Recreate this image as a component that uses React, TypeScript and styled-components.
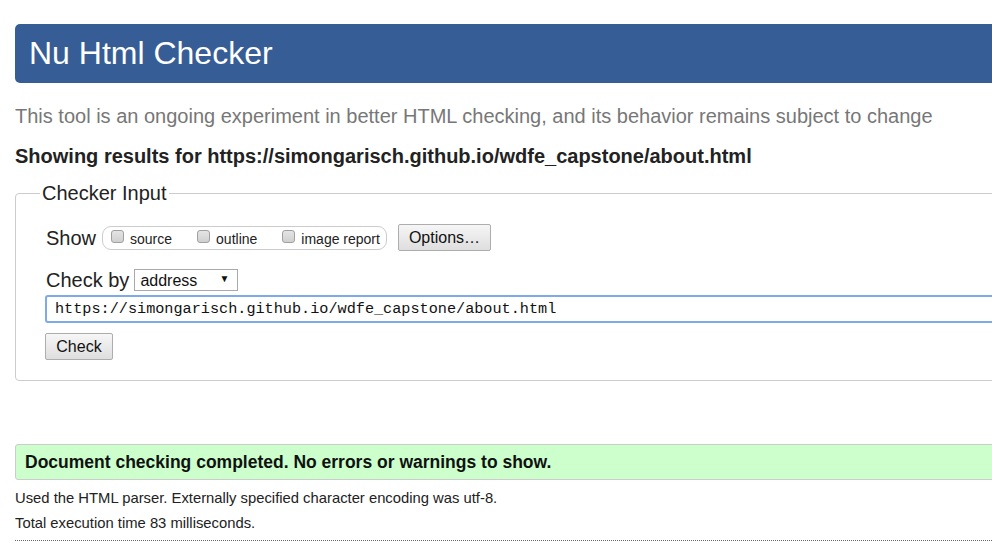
import styled, { createGlobalStyle } from "styled-components";

const GlobalStyle = createGlobalStyle`
  html, body {
    margin: 0;
    padding: 0;
    background: #fff;
    overflow: hidden;
  }
  body {
    font-family: "Liberation Sans", Arial, sans-serif;
    color: #222;
  }
`;

const Page = styled.div`
  width: 1060px;
  padding: 24px 0 0 15px;
  box-sizing: border-box;
`;

const Banner = styled.header`
  height: 59px;
  background: #365d95;
  border-radius: 5px;
  padding-left: 14px;
`;

const Title = styled.h1`
  margin: 0;
  color: #fff;
  font-size: 32px;
  font-weight: normal;
  line-height: 59px;
`;

const Intro = styled.p`
  margin: 21px 0 0;
  color: #777;
  font-size: 20px;
  line-height: 24px;
`;

const ResultsFor = styled.p`
  margin: 17px 0 0;
  font-size: 20px;
  font-weight: bold;
  line-height: 22px;
`;

const Fieldset = styled.fieldset`
  margin: 14px 0 0;
  padding: 19px 30px 20px 30px;
  border: 1px solid #ccc;
  border-radius: 4px;
  min-width: 0;
`;

const Legend = styled.legend`
  margin-left: -6px;
  padding: 0 2px;
  font-size: 20px;
  line-height: 24px;
`;

const Row = styled.div<{ $gap?: number; $top?: number }>`
  display: flex;
  align-items: center;
  gap: ${(p) => p.$gap ?? 6}px;
  margin-top: ${(p) => p.$top ?? 0}px;
`;

const Label = styled.span`
  font-size: 20px;
  line-height: 24px;
`;

const Pill = styled.div`
  display: flex;
  align-items: center;
  height: 22px;
  padding: 0 6px 0 8px;
  border: 1px solid #ccc;
  border-radius: 9px;
  gap: 25px;
`;

const Option = styled.label`
  display: flex;
  align-items: center;
  gap: 6px;
  font-size: 14px;
  line-height: 16px;
  padding-top: 3px;
`;

const Box = styled.input`
  appearance: none;
  margin: -5px 0 0;
  width: 13px;
  height: 13px;
  border: 1px solid #a0a0a0;
  border-radius: 3px;
  background: linear-gradient(#e4e4e4, #d0d0d0);
  box-sizing: border-box;
`;

const Button = styled.button<{ $left?: number }>`
  height: 27px;
  margin-left: ${(p) => p.$left ?? 0}px;
  padding: 0 10px;
  font-family: "Liberation Sans", Arial, sans-serif;
  font-size: 16px;
  color: #111;
  border: 1px solid #adadad;
  border-radius: 2px;
  background: linear-gradient(#f6f6f6, #dedede);
`;

const SelectWrap = styled.span`
  position: relative;
  display: inline-block;
`;

const Select = styled.select`
  appearance: none;
  width: 104px;
  height: 22px;
  padding: 0 0 0 5px;
  font-family: "Liberation Sans", Arial, sans-serif;
  font-size: 16px;
  color: #111;
  border: 1px solid #a9a9a9;
  border-radius: 0;
  background: #fff;
`;

const Arrow = styled.span`
  position: absolute;
  right: 9px;
  top: 4px;
  font-size: 10px;
  color: #111;
  pointer-events: none;
`;

const UrlInput = styled.input`
  display: block;
  box-sizing: border-box;
  width: 1000px;
  height: 28px;
  margin: 3px 0 0 -1px;
  padding: 0 0 0 8px;
  border: 2px solid #7eaae8;
  border-radius: 3px;
  outline: none;
  font-family: "Liberation Mono", "DejaVu Sans Mono", monospace;
  font-size: 15.2px;
  color: #111;
`;

const CheckButton = styled(Button)`
  display: block;
  margin: 10px 0 0 -1px;
  width: 68px;
  padding: 0;
`;

const Success = styled.div`
  margin-top: 63px;
  height: 36px;
  box-sizing: border-box;
  padding-left: 9px;
  background: #ccffcc;
  border: 1px solid #ccc;
  border-radius: 3px;
  font-size: 17.5px;
  font-weight: bold;
  line-height: 34px;
  color: #111;
`;

const Note = styled.p<{ $top: number }>`
  margin: ${(p) => p.$top}px 0 0;
  font-size: 14.8px;
  line-height: 17px;
  color: #222;
`;

const Rule = styled.hr`
  margin: 8px 0 0;
  border: 0;
  border-top: 1px dotted #666;
`;

export default function App() {
  return (
    <Page>
      <GlobalStyle />
      <Banner>
        <Title>Nu Html Checker</Title>
      </Banner>
      <Intro>
        This tool is an ongoing experiment in better HTML checking, and its behavior remains subject
        to change
      </Intro>
      <ResultsFor>Showing results for https://simongarisch.github.io/wdfe_capstone/about.html</ResultsFor>

      <Fieldset>
        <Legend>Checker Input</Legend>
        <Row $gap={6}>
          <Label>Show</Label>
          <Pill>
            <Option>
              <Box type="checkbox" />
              source
            </Option>
            <Option>
              <Box type="checkbox" />
              outline
            </Option>
            <Option>
              <Box type="checkbox" />
              image report
            </Option>
          </Pill>
          <Button $left={5}>Options…</Button>
        </Row>
        <Row $gap={5} $top={17}>
          <Label>Check by</Label>
          <SelectWrap>
            <Select defaultValue="address">
              <option value="address">address</option>
              <option value="file">file upload</option>
              <option value="text">text input</option>
            </Select>
            <Arrow>▼</Arrow>
          </SelectWrap>
        </Row>
        <UrlInput defaultValue="https://simongarisch.github.io/wdfe_capstone/about.html" />
        <CheckButton>Check</CheckButton>
      </Fieldset>

      <Success>Document checking completed. No errors or warnings to show.</Success>
      <Note $top={10}>Used the HTML parser. Externally specified character encoding was utf-8.</Note>
      <Note $top={8}>Total execution time 83 milliseconds.</Note>
      <Rule />
    </Page>
  );
}
